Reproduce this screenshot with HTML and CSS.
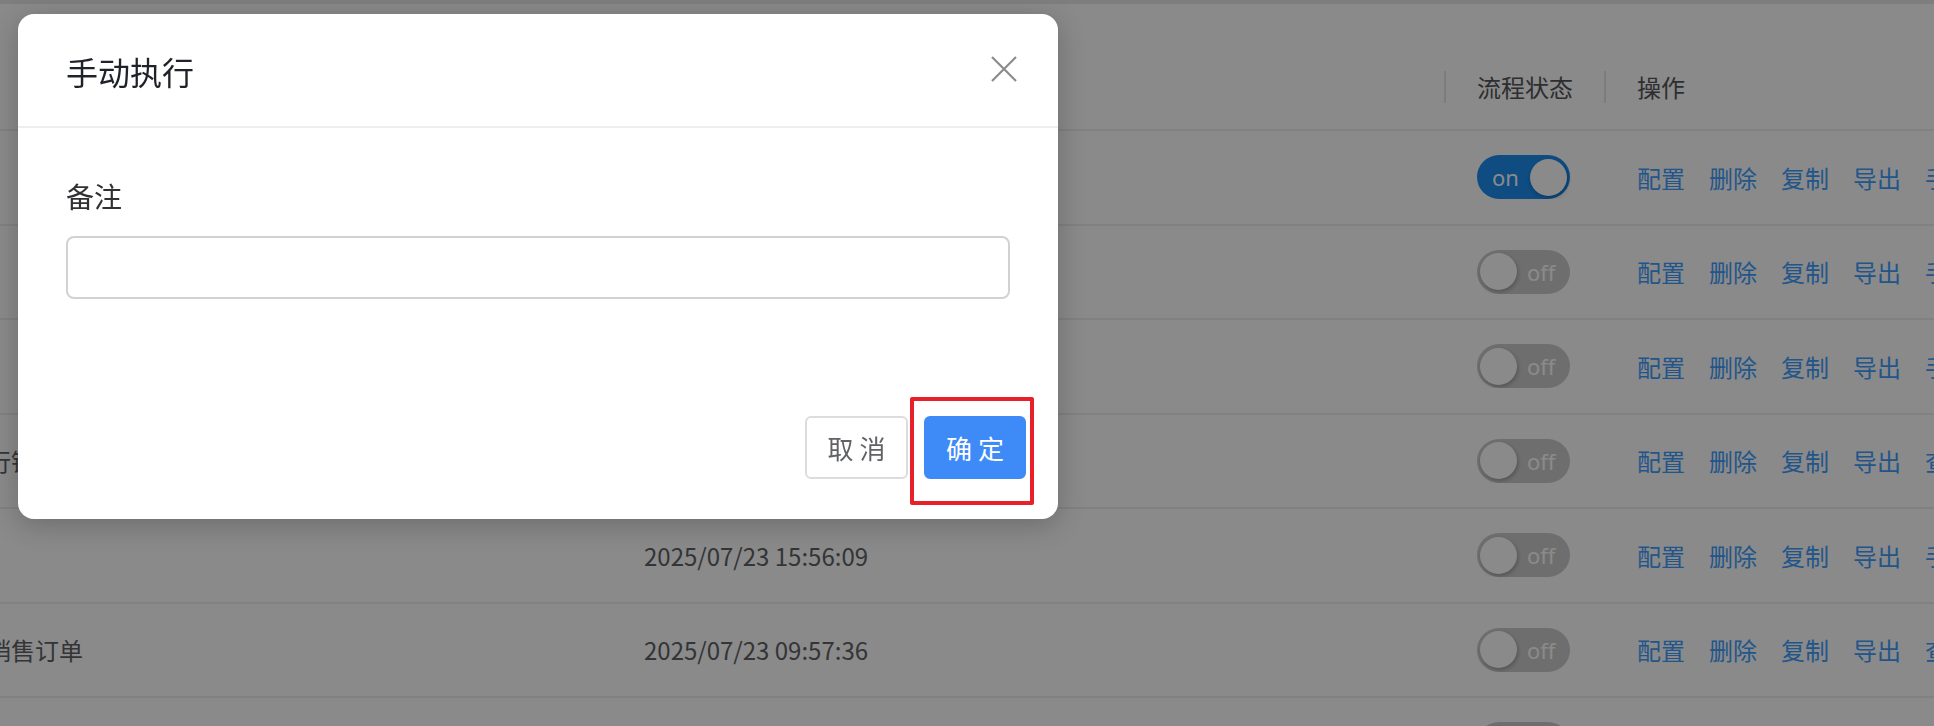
FILE: index.html
```html
<!DOCTYPE html>
<html lang="zh-CN">
<head>
<meta charset="utf-8">
<title>手动执行</title>
<link rel="stylesheet" href="styles.css">
</head>
<body>
<div class="page">
  <div class="topbar"></div>
  <div class="table">
    <div class="row thead">
      <div class="cell c-name"></div>
      <div class="cell c-date"></div>
      <div class="cell c-status"><span class="th">流程状态</span></div>
      <div class="cell c-ops"><span class="th">操作</span></div>
    </div>
    <div class="row">
      <div class="cell c-name"></div>
      <div class="cell c-date">2025/07/24 10:12:45</div>
      <div class="cell c-status"><span class="switch on"><span class="sw-text">on</span><span class="knob"></span></span></div>
      <div class="cell c-ops"><a>配置</a><a>删除</a><a>复制</a><a>导出</a><a>手动执行</a></div>
    </div>
    <div class="row">
      <div class="cell c-name"></div>
      <div class="cell c-date">2025/07/24 09:30:18</div>
      <div class="cell c-status"><span class="switch"><span class="knob"></span><span class="sw-text">off</span></span></div>
      <div class="cell c-ops"><a>配置</a><a>删除</a><a>复制</a><a>导出</a><a>手动执行</a></div>
    </div>
    <div class="row">
      <div class="cell c-name"></div>
      <div class="cell c-date">2025/07/23 18:02:51</div>
      <div class="cell c-status"><span class="switch"><span class="knob"></span><span class="sw-text">off</span></span></div>
      <div class="cell c-ops"><a>配置</a><a>删除</a><a>复制</a><a>导出</a><a>手动执行</a></div>
    </div>
    <div class="row">
      <div class="cell c-name">行销售出库单</div>
      <div class="cell c-date">2025/07/23 16:40:27</div>
      <div class="cell c-status"><span class="switch"><span class="knob"></span><span class="sw-text">off</span></span></div>
      <div class="cell c-ops"><a>配置</a><a>删除</a><a>复制</a><a>导出</a><a>查看</a></div>
    </div>
    <div class="row">
      <div class="cell c-name"></div>
      <div class="cell c-date">2025/07/23 15:56:09</div>
      <div class="cell c-status"><span class="switch"><span class="knob"></span><span class="sw-text">off</span></span></div>
      <div class="cell c-ops"><a>配置</a><a>删除</a><a>复制</a><a>导出</a><a>手动执行</a></div>
    </div>
    <div class="row">
      <div class="cell c-name">销售订单</div>
      <div class="cell c-date">2025/07/23 09:57:36</div>
      <div class="cell c-status"><span class="switch"><span class="knob"></span><span class="sw-text">off</span></span></div>
      <div class="cell c-ops"><a>配置</a><a>删除</a><a>复制</a><a>导出</a><a>查看</a></div>
    </div>
    <div class="row">
      <div class="cell c-name"></div>
      <div class="cell c-date">2025/07/22 14:21:03</div>
      <div class="cell c-status"><span class="switch"><span class="knob"></span><span class="sw-text">off</span></span></div>
      <div class="cell c-ops"><a>配置</a><a>删除</a><a>复制</a><a>导出</a><a>手动执行</a></div>
    </div>
  </div>
</div>

<div class="mask"></div>

<div class="dialog">
  <div class="dlg-header">
    <span class="dlg-title">手动执行</span>
    <span class="dlg-close">
      <svg width="26" height="26" viewBox="0 0 26 26"><path d="M1 1 L25 25 M25 1 L1 25" stroke="#8c8c8c" stroke-width="2.2" fill="none"/></svg>
    </span>
  </div>
  <div class="dlg-body">
    <div class="form-label">备注</div>
    <div class="input"></div>
  </div>
  <div class="dlg-footer">
    <button class="btn btn-default">取 消</button>
    <span class="confirm-wrap">
      <button class="btn btn-primary">确 定</button>
      <span class="highlight"></span>
    </span>
  </div>
</div>
</body>
</html>
```

FILE: styles.css
```css
html, body {
  margin: 0;
  padding: 0;
  overflow: hidden;
  width: 1934px;
  height: 726px;
  background: #ffffff;
  font-family: "Noto Sans CJK SC", "Noto Sans", sans-serif;
}

.page {
  width: 1934px;
  height: 726px;
  overflow: hidden;
}

.topbar {
  height: 4px;
  background: #e9e9e9;
}

.table {
  margin-top: 40px;
  margin-left: -13px;
  width: 2200px;
}

.row {
  display: grid;
  grid-template-columns: 657px 800px 160px 1fr;
  height: 94.5px;
  box-sizing: border-box;
  border-bottom: 2px solid #ebeef5;
  align-items: center;
  font-size: 24px;
  color: #606266;
}

.row.thead {
  height: 87px;
}

.cell {
  display: flex;
  align-items: center;
  white-space: nowrap;
  overflow: hidden;
}

.c-status, .c-ops {
  padding-left: 33px;
}

.thead .c-status, .thead .c-ops {
  border-left: 2px solid #e4e5ea;
  height: 32px;
  padding-left: 31px;
}

.th {
  color: #555659;
}

.c-ops a {
  color: #409eff;
  margin-right: 24px;
  cursor: pointer;
}

.switch {
  position: relative;
  display: flex;
  align-items: center;
  width: 93px;
  height: 44px;
  border-radius: 22px;
  background: #cccccc;
  box-sizing: border-box;
  padding: 0 3px;
  gap: 10px;
}

.switch.on {
  background: #1a8cf0;
  justify-content: space-between;
  padding: 0 3px 0 15px;
}

.knob {
  width: 37px;
  height: 37px;
  border-radius: 50%;
  background: #ffffff;
  box-shadow: 1px 2px 4px rgba(0, 0, 0, 0.25);
  flex: none;
}

.sw-text {
  color: #ffffff;
  font-size: 22px;
  line-height: 1;
  font-family: "Noto Sans", "Noto Sans CJK SC", sans-serif;
}

.mask {
  position: fixed;
  inset: 0;
  background: rgba(0, 0, 0, 0.46);
}

.dialog {
  position: absolute;
  left: 18px;
  top: 14px;
  width: 1040px;
  background: #ffffff;
  border-radius: 16px;
  box-shadow: 0 6px 28px rgba(0, 0, 0, 0.22);
}

.dlg-header {
  height: 112px;
  display: flex;
  align-items: center;
  justify-content: space-between;
  padding: 0 41px 0 48px;
  border-bottom: 2px solid #eeeeee;
}

.dlg-title {
  font-size: 32px;
  color: #1f2329;
  line-height: 1;
  margin-top: 2px;
}

.dlg-close {
  display: flex;
  width: 26px;
  height: 26px;
  margin-top: -2px;
}

.dlg-body {
  padding: 48px 48px 0;
}

.form-label {
  font-size: 28px;
  line-height: 40px;
  color: #303133;
}

.input {
  margin-top: 20px;
  height: 63px;
  box-sizing: border-box;
  border: 2px solid #d2d2d2;
  border-radius: 8px;
}

.dlg-footer {
  display: flex;
  justify-content: flex-end;
  gap: 16px;
  padding: 117px 32px 40px;
}

.btn {
  height: 63px;
  width: 103px;
  box-sizing: border-box;
  border-radius: 6px;
  font-family: "Noto Sans CJK SC", "Noto Sans", sans-serif;
  font-size: 26px;
  padding: 0;
  cursor: pointer;
}

.btn-default {
  background: #ffffff;
  border: 2px solid #dcdcdc;
  color: #606266;
}

.btn-primary {
  width: 102px;
  background: #3e8af7;
  border: 2px solid #3e8af7;
  color: #ffffff;
  display: block;
}

.confirm-wrap {
  position: relative;
  display: block;
}

.highlight {
  position: absolute;
  left: -14px;
  top: -19px;
  right: -8px;
  bottom: -26px;
  border: 4px solid #e8202a;
  border-radius: 2px;
}
```
